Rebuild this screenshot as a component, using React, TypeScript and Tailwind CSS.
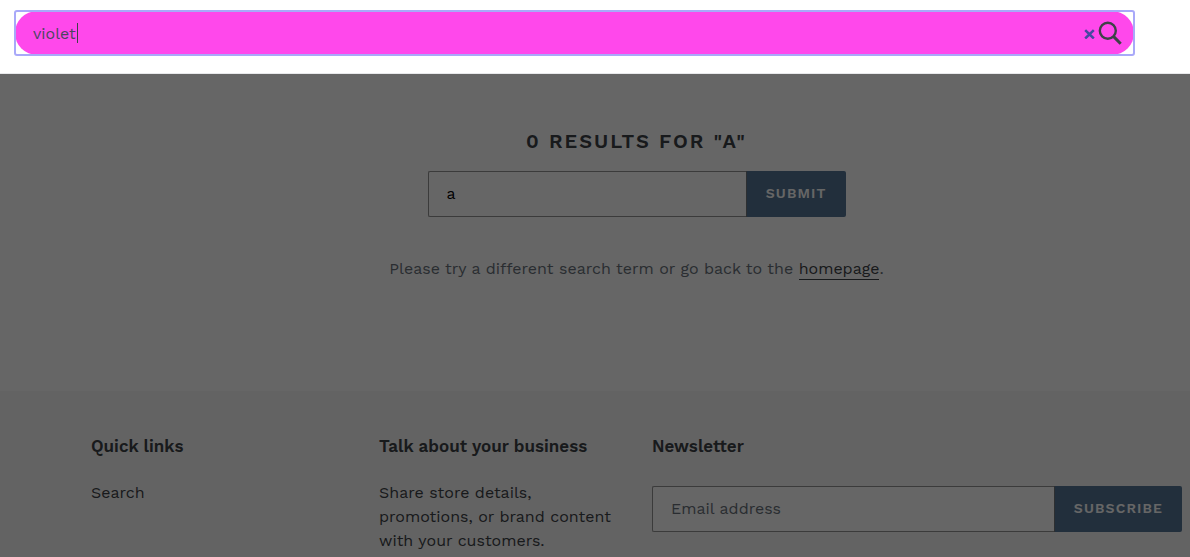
import * as React from 'react';

interface InlineFormProps {
  label: string;
  action: string;
  defaultValue?: string;
  placeholder?: string;
}

function InlineForm({ label, action, defaultValue, placeholder }: InlineFormProps) {
  return (
    <form className="flex h-[46px] w-full" onSubmit={(e) => e.preventDefault()}>
      <input
        type="text"
        aria-label={label}
        defaultValue={defaultValue}
        placeholder={placeholder}
        className="min-w-0 flex-1 rounded-l-xs border border-r-0 border-[#949494] bg-white px-[18px] text-base text-black placeholder:text-[#69727b] focus:outline-none"
      />
      <button
        type="submit"
        className="rounded-r-xs border-l border-[#70757b] bg-[#557797] px-[19px] pb-[2px] text-sm font-semibold uppercase tracking-[0.08em] text-white"
      >
        {action}
      </button>
    </form>
  );
}

function SearchDrawer() {
  const [term, setTerm] = React.useState('violet');

  return (
    <header className="relative z-20 border-b border-[#e8e9eb] bg-white pt-[11px] pr-14 pb-[18px] pl-[15px]">
      <form
        role="search"
        className="relative flex h-11 items-center rounded-xs outline-2 -outline-offset-1 outline-[#a9a9f9]"
        onSubmit={(e) => e.preventDefault()}
      >
        <input
          type="text"
          aria-label="Search our store"
          value={term}
          onChange={(e) => setTerm(e.target.value)}
          className="h-full w-full rounded-full bg-[#ff48eb] pr-20 pl-[18px] text-base text-[#4b4660] focus:outline-none"
        />
        {term === 'violet' && (
          <span className="pointer-events-none absolute left-[62px] h-5 w-px bg-[#3d4246]" />
        )}
        <div className="absolute right-3 flex items-center gap-[3px]">
          <button type="button" aria-label="Clear" onClick={() => setTerm('')}>
            <svg viewBox="0 0 11 11" className="size-[11px]">
              <path d="M1.2 2.2l8.6 8.3M9.8 2.2L1.2 10.5" stroke="#4649a0" strokeWidth="2.5" />
            </svg>
          </button>
          <button type="submit" aria-label="Search">
            <svg viewBox="0 0 24 24" className="size-6" fill="none" stroke="#3d4246">
              <circle cx="9.8" cy="9.8" r="8" strokeWidth="2.4" />
              <path d="M15.4 15.4l7.3 7.3" strokeWidth="3" />
            </svg>
          </button>
        </div>
      </form>
    </header>
  );
}

function Footer() {
  return (
    <footer className="grid flex-1 grid-cols-[288fr_273fr_530fr] bg-[#f7f7f7] pt-[43px] pr-2 pl-[91px] text-[#3d4246]">
      <section>
        <h2 className="mb-[23px] text-[17px] leading-6 font-semibold">Quick links</h2>
        <a href="#search">Search</a>
      </section>
      <section className="pr-7">
        <h2 className="mb-[23px] text-[17px] leading-6 font-semibold">
          Talk about your business
        </h2>
        <p>
          Share store details,
          <br />
          promotions, or brand content
          <br />
          with your customers.
        </p>
      </section>
      <section>
        <h2 className="mb-7 text-[17px] leading-6 font-semibold">Newsletter</h2>
        <InlineForm label="Email address" action="Subscribe" placeholder="Email address" />
      </section>
    </footer>
  );
}

export default function App() {
  return (
    <div className="relative flex min-h-screen flex-col bg-white font-['Work_Sans',Inter,sans-serif] text-base leading-6">
      <SearchDrawer />
      <main className="flex flex-col items-center pt-[53px] pb-[110px] pl-[83px]">
        <h1 className="mb-4 text-xl leading-7 font-semibold uppercase tracking-widest text-[#3d4246]">
          0 results for "a"
        </h1>
        <div className="w-[418px]">
          <InlineForm label="Search" action="Submit" defaultValue="a" />
        </div>
        <p className="mt-10 text-[#69727b]">
          Please try a different search term or go back to the{' '}
          <a href="#home" className="border-b border-[#3d4246] pb-px text-[#3d4246]">
            homepage
          </a>
          .
        </p>
      </main>
      <Footer />
      <div className="pointer-events-none absolute inset-0 z-10 bg-black/60" />
    </div>
  );
}
